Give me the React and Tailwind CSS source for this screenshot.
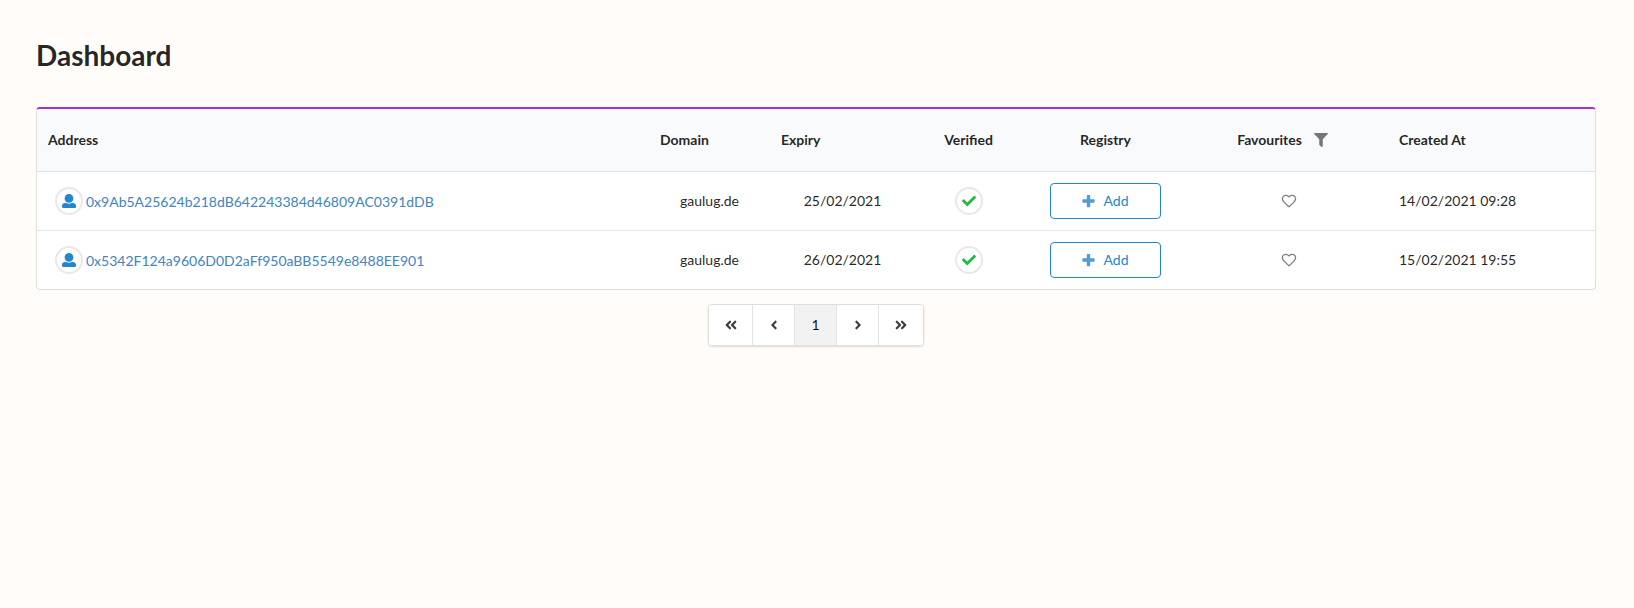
import { FaCheck, FaFilter, FaAngleDoubleLeft, FaAngleLeft, FaAngleRight, FaAngleDoubleRight } from "react-icons/fa";

const rows = [
  { address: "0x9Ab5A25624b218dB642243384d46809AC0391dDB", domain: "gaulug.de", expiry: "25/02/2021", created: "14/02/2021 09:28" },
  { address: "0x5342F124a9606D0D2aFf950aBB5549e8488EE901", domain: "gaulug.de", expiry: "26/02/2021", created: "15/02/2021 19:55" },
];

function UserIcon() {
  return (
    <svg viewBox="0 0 512 512" className="size-[14px] fill-[#2185d0]" aria-hidden="true">
      <path d="M256 0c88.366 0 160 71.634 160 160s-71.634 160-160 160S96 248.366 96 160 167.634 0 256 0zm183.283 333.821l-71.313-17.828c-74.923 53.89-165.738 41.864-223.94 0l-71.313 17.828C29.981 344.505 0 382.903 0 426.955V464c0 26.51 21.49 48 48 48h416c26.51 0 48-21.49 48-48v-37.045c0-44.052-29.981-82.45-72.717-93.134z" />
    </svg>
  );
}

function PlusIcon() {
  return (
    <svg viewBox="0 0 448 512" className="h-[14px] w-[13px] fill-current opacity-80" aria-hidden="true">
      <path d="M448 294.2v-76.4c0-13.3-10.7-24-24-24H286.2V56c0-13.3-10.7-24-24-24h-76.4c-13.3 0-24 10.7-24 24v137.8H24c-13.3 0-24 10.7-24 24v76.4c0 13.3 10.7 24 24 24h137.8V456c0 13.3 10.7 24 24 24h76.4c13.3 0 24-10.7 24-24V318.2H424c13.3 0 24-10.7 24-24z" />
    </svg>
  );
}

function HeartIcon() {
  return (
    <svg viewBox="0 0 576 512" className="h-[14px] w-[16px] fill-[#808080]" aria-hidden="true">
      <path d="M257.3 475.4L92.5 313.6C85.4 307 24 248.1 24 174.8 24 84.1 80.8 24 176 24c41.4 0 80.6 22.8 112 49.8 31.3-27 70.6-49.8 112-49.8 91.7 0 152 56.5 152 150.8 0 52-31.8 103.5-68.1 138.7l-.4.4-164.8 161.5a43.7 43.7 0 0 1-61.4 0zM125.9 279.1L288 438.3l161.8-158.8c27.3-27 54.2-66.3 54.2-104.8C504 107.9 465.4 72 400 72c-48.7 0-92.8 47.8-112 64.5-19.2-16.7-58-64.5-112-64.5-67.4 0-104 36.1-104 102.8 0 38.5 26.9 78.2 53.9 104.3z" />
    </svg>
  );
}

function Circle({ children }) {
  return (
    <span className="inline-flex size-7 shrink-0 items-center justify-center rounded-full border-2 border-[#e8e8e8] bg-white">
      {children}
    </span>
  );
}

function PageButton({ label, wide, current, children }) {
  return (
    <button
      type="button"
      aria-label={label}
      aria-current={current ? "page" : undefined}
      className={`flex h-10 items-center justify-center border-r border-[#e3e4e4] last:border-r-0 ${wide ? "w-11" : "w-[42px]"} ${current ? "bg-[#f2f2f2] text-black/95" : "bg-white text-[#404040]"}`}
    >
      {children}
    </button>
  );
}

export default function App() {
  return (
    <main className="min-h-screen bg-[#fffcf9] pt-[37px] pr-[38px] pl-9 font-[Lato,sans-serif] text-[14px] leading-[18px] text-black/87">
      <h1 className="text-[28px] font-bold leading-9">Dashboard</h1>

      <div className="mt-[34px] overflow-hidden rounded-[4px] border border-t-2 border-[#dededf] border-t-[#a333c8] bg-white">
        <table className="w-full table-fixed border-collapse text-left">
          <colgroup>
            <col />
            <col className="w-[121px]" />
            <col className="w-[145px]" />
            <col className="w-[107px]" />
            <col className="w-[167px]" />
            <col className="w-[199px]" />
            <col className="w-[207px]" />
          </colgroup>
          <thead className="bg-[#f9fafb]">
            <tr className="h-[62px] border-b border-[#e1e2e3]">
              <th className="px-[11px] font-bold">Address</th>
              <th className="px-[11px] font-bold">Domain</th>
              <th className="px-[11px] font-bold">Expiry</th>
              <th className="px-[11px] text-center font-bold">Verified</th>
              <th className="px-[11px] text-center font-bold">Registry</th>
              <th className="px-[11px] font-bold">
                <div className="flex items-center justify-center gap-3">
                  <span>Favourites</span>
                  <button type="button" aria-label="Filter favourites" className="pr-3">
                    <FaFilter className="size-[14px] text-[#767676]" />
                  </button>
                </div>
              </th>
              <th className="px-[11px] font-bold">Created At</th>
            </tr>
          </thead>
          <tbody>
            {rows.map((row) => (
              <tr key={row.address} className="h-[59px] border-b border-[#e8e8e8] last:border-b-0">
                <td className="pl-[18px]">
                  <div className="flex items-center gap-[3px]">
                    <Circle><UserIcon /></Circle>
                    <a href="#" className="pt-[2px] text-[#4183c4]">{row.address}</a>
                  </div>
                </td>
                <td className="text-center">{row.domain}</td>
                <td className="text-center">{row.expiry}</td>
                <td>
                  <div className="flex justify-center">
                    <Circle><FaCheck className="size-[14px] text-[#21ba45]" /></Circle>
                  </div>
                </td>
                <td>
                  <div className="flex justify-center">
                    <button type="button" className="flex h-9 w-[111px] items-center justify-center gap-2 rounded-[4px] border border-[#2185d0] bg-white text-[#2185d0]">
                      <PlusIcon />
                      Add
                    </button>
                  </div>
                </td>
                <td>
                  <div className="flex justify-center">
                    <button type="button" aria-label="Add to favourites"><HeartIcon /></button>
                  </div>
                </td>
                <td className="px-[11px]">{row.created}</td>
              </tr>
            ))}
          </tbody>
        </table>
      </div>

      <nav aria-label="Pagination" className="mt-[14px] flex justify-center">
        <div className="flex overflow-hidden rounded-[4px] border border-[#dededf] shadow-[0_1px_2px_0_rgba(34,36,38,0.15)]">
          <PageButton label="First page" wide><FaAngleDoubleLeft className="size-[14px]" /></PageButton>
          <PageButton label="Previous page"><FaAngleLeft className="size-[14px]" /></PageButton>
          <PageButton label="Page 1" current>1</PageButton>
          <PageButton label="Next page"><FaAngleRight className="size-[14px]" /></PageButton>
          <PageButton label="Last page" wide><FaAngleDoubleRight className="size-[14px]" /></PageButton>
        </div>
      </nav>
    </main>
  );
}
